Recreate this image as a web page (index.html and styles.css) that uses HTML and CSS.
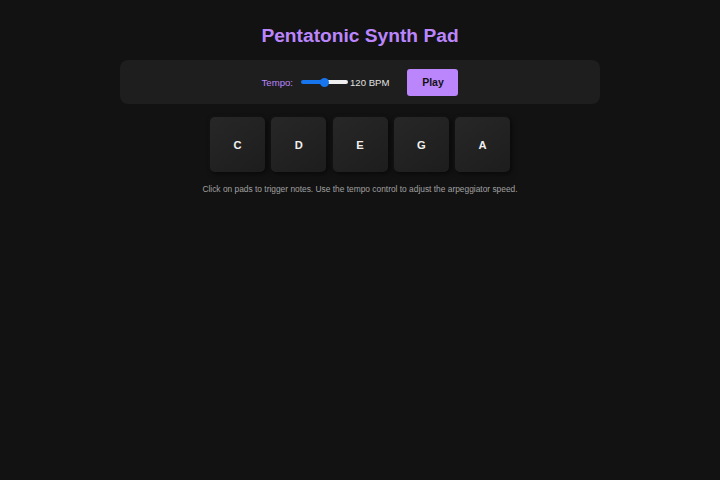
FILE: index.html
```html
<!DOCTYPE html>
<html lang="en">
<head>
<meta charset="utf-8">
<title>Pentatonic Synth Pad</title>
<link rel="stylesheet" href="styles.css">
</head>
<body>
<main class="app">
  <h1 class="title">Pentatonic Synth Pad</h1>
  <section class="controls">
    <label class="tempo-label" for="tempo">Tempo:</label>
    <input class="tempo" id="tempo" type="range" min="60" max="180" value="120">
    <span class="bpm">120 BPM</span>
    <button class="play">Play</button>
  </section>
  <section class="pads">
    <div class="pad">C</div>
    <div class="pad">D</div>
    <div class="pad">E</div>
    <div class="pad">G</div>
    <div class="pad">A</div>
  </section>
  <p class="hint">Click on pads to trigger notes. Use the tempo control to adjust the arpeggiator speed.</p>
</main>
</body>
</html>
```
FILE: styles.css
```css
html, body {
  margin: 0;
  background: #121212;
  font-family: "Liberation Sans", Arial, sans-serif;
  color: #e0e0e0;
}

.app {
  width: 480px;
  margin: 0 auto;
  padding-top: 24px;
  display: flex;
  flex-direction: column;
  align-items: center;
}

.title {
  margin: 0 0 12px;
  font-size: 19.2px;
  line-height: 24px;
  font-weight: bold;
  color: #bb86fc;
}

.controls {
  width: 480px;
  height: 44px;
  box-sizing: border-box;
  background: #1e1e1e;
  border-radius: 8px;
  display: flex;
  align-items: center;
  justify-content: center;
}

.tempo-label {
  font-size: 9.6px;
  color: #bb86fc;
  margin-right: 8px;
}

.tempo {
  -webkit-appearance: none;
  appearance: none;
  width: 47px;
  height: 4px;
  margin: 0 2px 0 0;
  border-radius: 2px;
  background: linear-gradient(to right, #1775ee 0, #1775ee 52%, #efefef 52%, #efefef 100%);
  outline: none;
}

.tempo::-webkit-slider-thumb {
  -webkit-appearance: none;
  appearance: none;
  width: 9px;
  height: 9px;
  border-radius: 50%;
  background: #1775ee;
  border: none;
}

.bpm {
  font-size: 9.6px;
  color: #e0e0e0;
  margin-right: 18px;
}

.play {
  width: 51px;
  height: 27px;
  border: none;
  border-radius: 3px;
  background: #bb86fc;
  color: #121212;
  font-family: "Liberation Sans", Arial, sans-serif;
  font-size: 10.5px;
  font-weight: bold;
  padding: 0;
}

.pads {
  margin-top: 13px;
  display: flex;
  gap: 6.25px;
}

.pad {
  width: 55px;
  height: 55px;
  border-radius: 5px;
  background: linear-gradient(145deg, #272727, #1d1d1d);
  box-shadow: 2px 2px 5px rgba(0, 0, 0, 0.5), -1px -1px 3px rgba(40, 40, 40, 0.2);
  display: flex;
  align-items: center;
  justify-content: center;
  font-size: 11.2px;
  font-weight: bold;
  color: #f0f0f0;
}

.hint {
  margin: 12px 0 0;
  font-size: 8.4px;
  line-height: 10px;
  color: #a0a0a0;
}
```
